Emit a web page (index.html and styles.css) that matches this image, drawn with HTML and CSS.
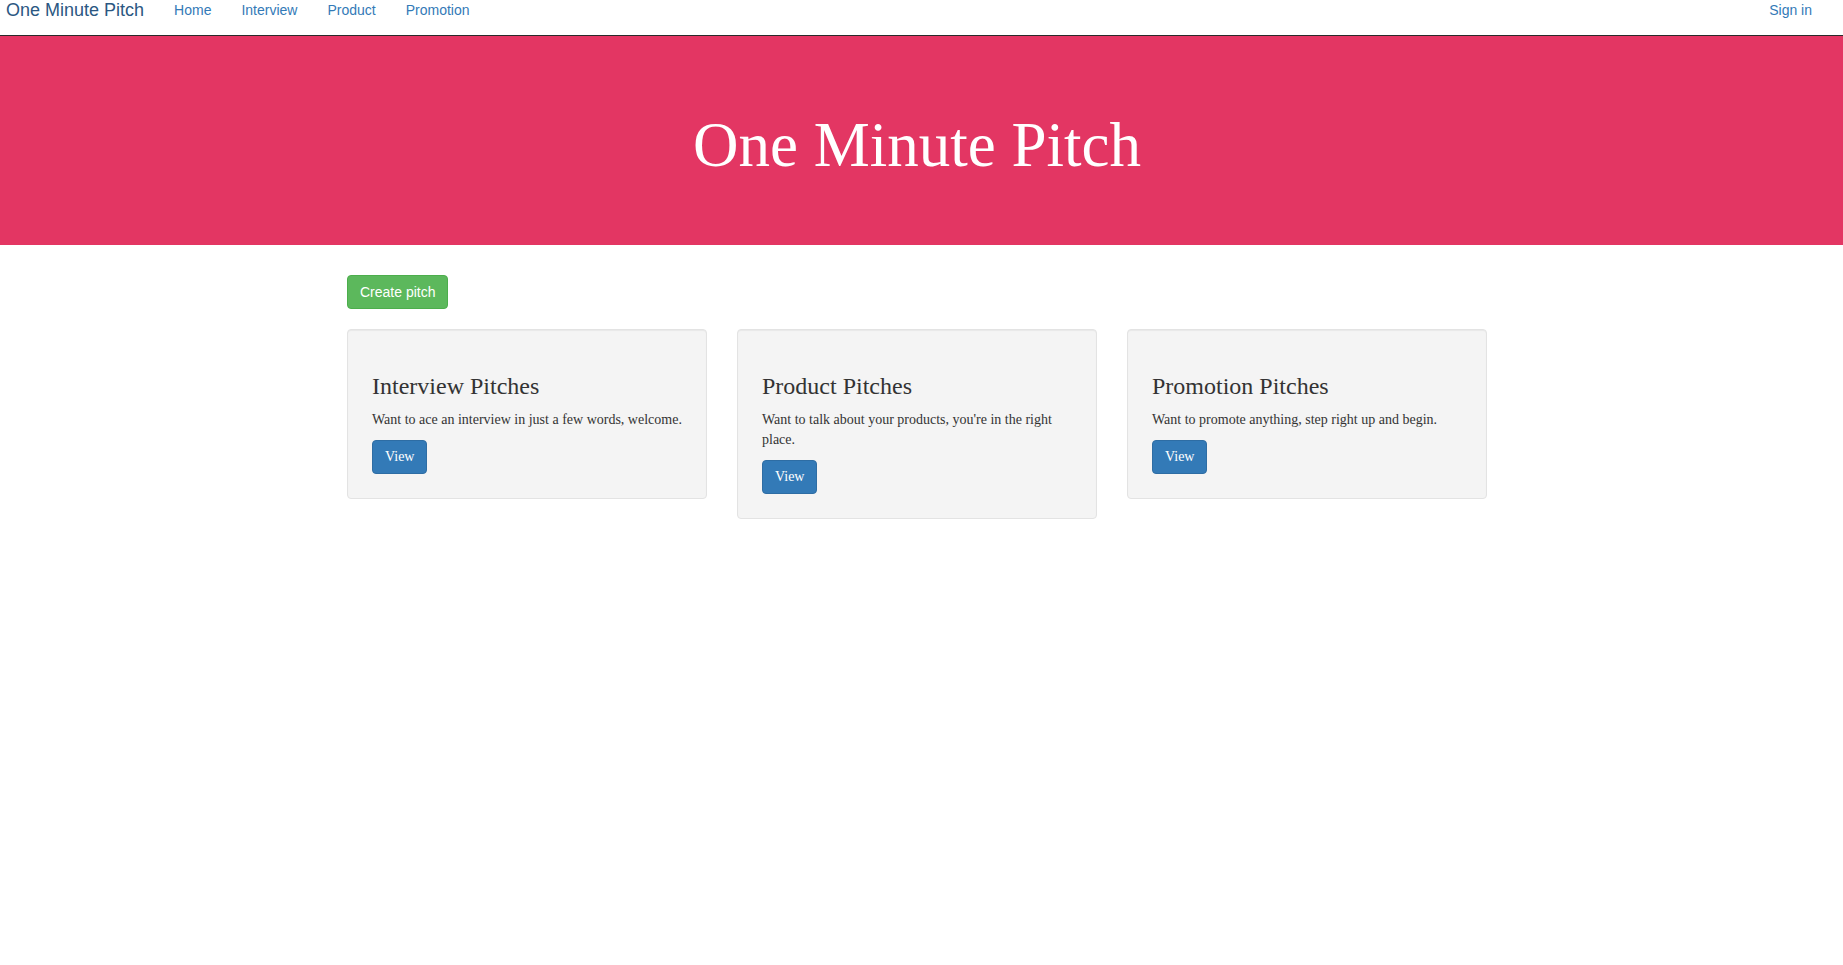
FILE: index.html
```html
<!DOCTYPE html>
<html lang="en">
<head>
<meta charset="utf-8">
<title>One Minute Pitch</title>
<link rel="stylesheet" href="styles.css">
</head>
<body>
<nav class="navbar">
  <div class="nav-left">
    <a class="brand" href="#">One Minute Pitch</a>
    <ul class="nav-links">
      <li><a href="#">Home</a></li>
      <li><a href="#">Interview</a></li>
      <li><a href="#">Product</a></li>
      <li><a href="#">Promotion</a></li>
    </ul>
  </div>
  <ul class="nav-links">
    <li><a href="#">Sign in</a></li>
  </ul>
</nav>
<header class="jumbotron">
  <h1>One Minute Pitch</h1>
</header>
<main class="container">
  <div class="actions">
    <a class="btn btn-success" href="#">Create pitch</a>
  </div>
  <div class="cards">
    <div class="card">
      <h3>Interview Pitches</h3>
      <p>Want to ace an interview in just a few words, welcome.</p>
      <a class="btn btn-primary" href="#">View</a>
    </div>
    <div class="card">
      <h3>Product Pitches</h3>
      <p>Want to talk about your products, you're in the right place.</p>
      <a class="btn btn-primary" href="#">View</a>
    </div>
    <div class="card">
      <h3>Promotion Pitches</h3>
      <p>Want to promote anything, step right up and begin.</p>
      <a class="btn btn-primary" href="#">View</a>
    </div>
  </div>
</main>
</body>
</html>
```
FILE: styles.css
```css
* { box-sizing: border-box; }
html, body { margin: 0; padding: 0; }
body {
  font-family: "Liberation Sans", Arial, sans-serif;
  font-size: 14px;
  line-height: 20px;
  color: #333;
  background: #fff;
}
a { text-decoration: none; }

.navbar {
  display: flex;
  justify-content: space-between;
  align-items: flex-start;
  height: 36px;
  border-bottom: 1px solid #2a2a2a;
  padding: 0 16px 0 6px;
  background: #fff;
}
.nav-left { display: flex; align-items: flex-start; }
.brand {
  font-size: 18px;
  line-height: 20px;
  color: #2b5782;
  padding-right: 15px;
}
.nav-links {
  list-style: none;
  margin: 0;
  padding: 0;
  display: flex;
}
.nav-links a {
  display: block;
  padding: 0 15px;
  line-height: 20px;
  color: #337ab7;
}

.jumbotron {
  background: #e33663;
  padding: 55px 9px 65px 0;
  text-align: center;
  margin-bottom: 30px;
}
.jumbotron h1 {
  margin: 20px 0 0;
  font-family: "Liberation Serif", "Times New Roman", serif;
  font-weight: 400;
  font-size: 63px;
  line-height: 69.3px;
  color: #fff;
}

.container {
  width: 1140px;
  margin-left: calc(50% - 574.5px);
}
.actions { margin-bottom: 20px; }
.btn {
  display: inline-block;
  padding: 6px 12px;
  border: 1px solid transparent;
  border-radius: 4px;
  font-size: 14px;
  line-height: 20px;
  color: #fff;
}
.btn-success { background: #5cb85c; border-color: #4cae4c; }
.btn-primary {
  background: #337ab7;
  border-color: #2e6da4;
  font-family: "Liberation Serif", "Times New Roman", serif;
}

.cards {
  display: grid;
  grid-template-columns: repeat(3, 360px);
  column-gap: 30px;
  align-items: start;
}
.card {
  background: #f4f4f4;
  border: 1px solid #e3e3e3;
  border-radius: 4px;
  box-shadow: inset 0 1px 1px rgba(0,0,0,.05);
  padding: 23px 24px 24px;
  font-family: "Liberation Serif", "Times New Roman", serif;
}
.card h3 {
  margin: 20px 0 10px;
  font-size: 24px;
  font-weight: 400;
  line-height: 26.4px;
  color: #333;
}
.card p {
  margin: 0 0 10px;
  font-size: 14px;
  line-height: 20px;
  color: #333;
}
```
